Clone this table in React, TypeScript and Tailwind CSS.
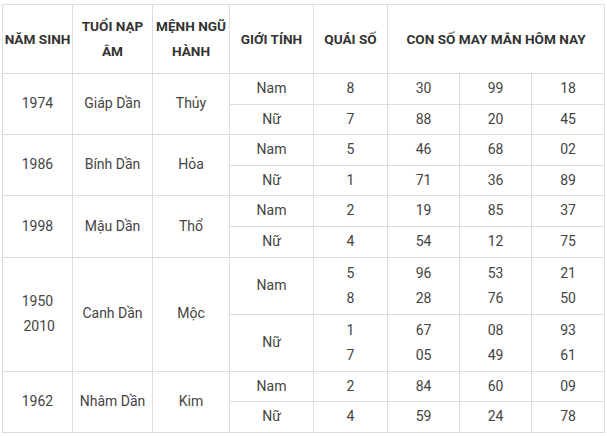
import React from "react";

type Sub = { gender: string; quai: string[]; nums: string[][] };
type Row = { year: string[]; tuoi: string; menh: string; subs: Sub[] };

const rows: Row[] = [
  {
    year: ["1974"],
    tuoi: "Giáp Dần",
    menh: "Thủy",
    subs: [
      { gender: "Nam", quai: ["8"], nums: [["30"], ["99"], ["18"]] },
      { gender: "Nữ", quai: ["7"], nums: [["88"], ["20"], ["45"]] },
    ],
  },
  {
    year: ["1986"],
    tuoi: "Bính Dần",
    menh: "Hỏa",
    subs: [
      { gender: "Nam", quai: ["5"], nums: [["46"], ["68"], ["02"]] },
      { gender: "Nữ", quai: ["1"], nums: [["71"], ["36"], ["89"]] },
    ],
  },
  {
    year: ["1998"],
    tuoi: "Mậu Dần",
    menh: "Thổ",
    subs: [
      { gender: "Nam", quai: ["2"], nums: [["19"], ["85"], ["37"]] },
      { gender: "Nữ", quai: ["4"], nums: [["54"], ["12"], ["75"]] },
    ],
  },
  {
    year: ["1950", "\u00a02010"],
    tuoi: "Canh Dần",
    menh: "Mộc",
    subs: [
      { gender: "Nam", quai: ["5", "8"], nums: [["96", "28"], ["53", "76"], ["21", "50"]] },
      { gender: "Nữ", quai: ["1", "7"], nums: [["67", "05"], ["08", "49"], ["93", "61"]] },
    ],
  },
  {
    year: ["1962"],
    tuoi: "Nhâm Dần",
    menh: "Kim",
    subs: [
      { gender: "Nam", quai: ["2"], nums: [["84"], ["60"], ["09"]] },
      { gender: "Nữ", quai: ["4"], nums: [["59"], ["24"], ["78"]] },
    ],
  },
];

const td = "border border-[#dddddd] px-1 py-[3px] text-center align-middle";
const th = "border border-[#dddddd] px-0 py-[9px] text-center align-middle font-bold text-[#333333] leading-[25px] text-[13.6px]";

const Lines = ({ items }: { items: string[] }) => (
  <>
    {items.map((t, i) => (
      <div key={i} className={items.length > 1 ? "leading-[25px]" : "leading-[23.6px]"}>
        {t}
      </div>
    ))}
  </>
);

export default function App() {
  return (
    <div className="bg-white w-[607px] h-[436px] pt-[4px] pl-[2px]" style={{ fontFamily: "Roboto, 'Liberation Sans', sans-serif" }}>
      <table className="table-fixed border-collapse w-[602px] text-[14px] text-[#444444]">
        <colgroup>
          <col className="w-[70px]" />
          <col className="w-[80px]" />
          <col className="w-[77px]" />
          <col className="w-[84px]" />
          <col className="w-[74px]" />
          <col className="w-[72px]" />
          <col className="w-[72px]" />
          <col className="w-[73px]" />
        </colgroup>
        <thead>
          <tr>
            <th className={th}>NĂM SINH</th>
            <th className={th}>
              TUỔI NẠP
              <br />
              ÂM
            </th>
            <th className={th}>
              MỆNH NGŨ
              <br />
              HÀNH
            </th>
            <th className={th}>GIỚI TÍNH</th>
            <th className={th}>QUÁI SỐ</th>
            <th className={th} colSpan={3}>
              CON SỐ MAY MẮN HÔM NAY
            </th>
          </tr>
        </thead>
        <tbody>
          {rows.map((r) =>
            r.subs.map((s, i) => (
              <tr key={r.tuoi + i}>
                {i === 0 && (
                  <>
                    <td className={td} rowSpan={2}>
                      <Lines items={r.year} />
                    </td>
                    <td className={td} rowSpan={2}>
                      <Lines items={[r.tuoi]} />
                    </td>
                    <td className={td} rowSpan={2}>
                      <Lines items={[r.menh]} />
                    </td>
                  </>
                )}
                <td className={td}>
                  <Lines items={[s.gender]} />
                </td>
                <td className={td}>
                  <Lines items={s.quai} />
                </td>
                {s.nums.map((n, j) => (
                  <td key={j} className={td}>
                    <Lines items={n} />
                  </td>
                ))}
              </tr>
            ))
          )}
        </tbody>
      </table>
    </div>
  );
}
